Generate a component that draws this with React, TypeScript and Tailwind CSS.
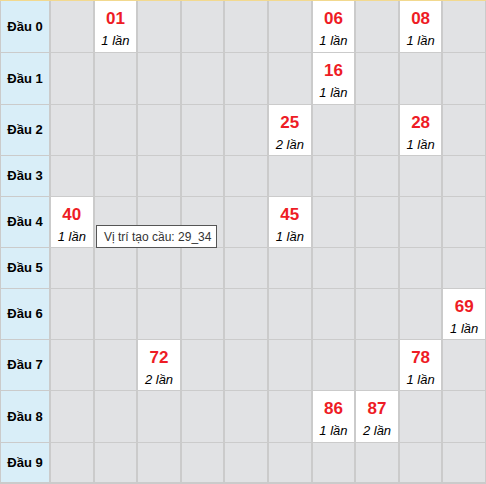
import React from "react";

type Cell = { n: string; c: number } | null;

const data: Record<number, Record<number, { n: string; c: number }>> = {
  0: { 1: { n: "01", c: 1 }, 6: { n: "06", c: 1 }, 8: { n: "08", c: 1 } },
  1: { 6: { n: "16", c: 1 } },
  2: { 5: { n: "25", c: 2 }, 8: { n: "28", c: 1 } },
  3: {},
  4: { 0: { n: "40", c: 1 }, 5: { n: "45", c: 1 } },
  5: {},
  6: { 9: { n: "69", c: 1 } },
  7: { 2: { n: "72", c: 2 }, 8: { n: "78", c: 1 } },
  8: { 6: { n: "86", c: 1 }, 7: { n: "87", c: 2 } },
  9: {},
};

const heights = [
  "h-[51px]",
  "h-[51px]",
  "h-[50px]",
  "h-[40px]",
  "h-[50px]",
  "h-[40px]",
  "h-[50px]",
  "h-[50px]",
  "h-[51px]",
  "h-[39px]",
];

export default function App() {
  const rows = Array.from({ length: 10 }, (_, i) => i);
  const cols = Array.from({ length: 10 }, (_, i) => i);
  return (
    <div
      className="relative w-[486px] h-[484px] bg-[#cbcbcb] overflow-hidden"
      style={{ fontFamily: '"Liberation Sans", Arial, sans-serif' }}
    >
      <div className="h-px bg-[#f2d98f]" />
      <div className="flex flex-col gap-px pl-px pr-px">
        {rows.map((r) => (
          <div
            key={r}
            className={`grid grid-cols-[48px_repeat(10,1fr)] gap-x-[2px] ${heights[r]}`}
          >
            <div className="bg-[#d9eef8] flex items-center justify-center text-[13px] font-bold text-black">
              Đầu {r}
            </div>
            {cols.map((c) => {
              const cell: Cell = data[r][c] ?? null;
              if (!cell) return <div key={c} className="bg-[#e1e2e4]" />;
              return (
                <div
                  key={c}
                  className="bg-white flex flex-col items-center justify-center pt-[6px]"
                >
                  <div className="text-[17px] font-bold text-[#ee1c25] leading-[20px]">
                    {cell.n}
                  </div>
                  <div className="text-[13px] italic text-black leading-[18px] mt-[3px]">
                    {cell.c} lần
                  </div>
                </div>
              );
            })}
          </div>
        ))}
      </div>
      <div className="absolute left-[96px] top-[225px] w-[121px] h-[23px] bg-white border border-[#555] flex items-center px-[7px] text-[12px] text-[#333] whitespace-nowrap">
        Vị trí tạo cầu: 29_34
      </div>
    </div>
  );
}
